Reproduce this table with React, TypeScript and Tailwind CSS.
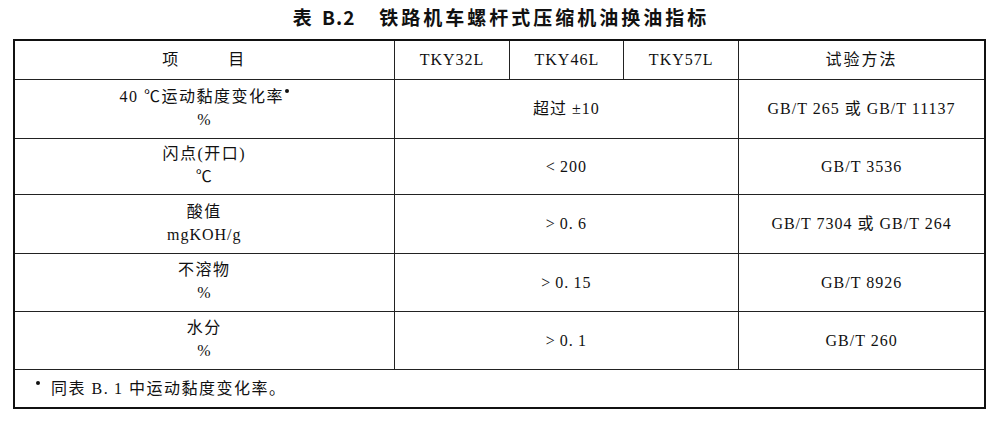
import React from "react";

const font = "font-['Liberation_Serif','Noto_Sans_CJK_SC',serif]";

type Row = { name: React.ReactNode; unit: string; value: string; method: string; h: string };

const Dot = ({ cls }: { cls: string }) => (
  <span className={`inline-block w-[4px] h-[4px] rounded-full bg-[#111] align-top mt-[4px] ${cls}`} />
);

const rows: Row[] = [
  {
    name: (
      <>
        40 ℃运动黏度变化率<Dot cls="ml-[1px]" />
      </>
    ),
    unit: "%",
    value: "超过 ±10",
    method: "GB/T 265 或 GB/T 11137",
    h: "h-[59px]",
  },
  { name: "闪点(开口)", unit: "℃", value: "<\u2009200", method: "GB/T 3536", h: "h-[56px]" },
  { name: "酸值", unit: "mgKOH/g", value: ">\u20090.\u20096", method: "GB/T 7304 或 GB/T 264", h: "h-[59px]" },
  { name: "不溶物", unit: "%", value: ">\u20090.\u200915", method: "GB/T 8926", h: "h-[58px]" },
  { name: "水分", unit: "%", value: ">\u20090.\u20091", method: "GB/T 260", h: "h-[58px]" },
];

export default function App() {
  return (
    <div className={`w-[1000px] h-[423px] bg-white text-[#111] ${font}`}>
      <div className="h-[39px] flex items-center justify-center pb-[4px]">
        <h1 className="text-[19px] font-bold tracking-[3px] font-['Noto_Sans_CJK_SC',sans-serif] pl-[2px]">
          表 <span className="tracking-[1px]">B.</span>2&nbsp;&nbsp;&nbsp;铁路机车螺杆式压缩机油换油指标
        </h1>
      </div>
      <div className="pl-[13px]">
        <table className="w-[973px] border-collapse border-2 border-[#111] text-[16px] leading-[23px] tracking-[1px] text-center">
          <colgroup>
            <col className="w-[381px]" />
            <col className="w-[116px]" />
            <col className="w-[114px]" />
            <col className="w-[115px]" />
            <col className="w-[247px]" />
          </colgroup>
          <thead>
            <tr className="h-[39px]">
              <th className="font-normal border border-[#222] tracking-[2px]">项&nbsp;&nbsp;&nbsp;&nbsp;&nbsp;&nbsp;&nbsp;&nbsp;目</th>
              <th className="font-normal border border-[#222]">TKY32L</th>
              <th className="font-normal border border-[#222]">TKY46L</th>
              <th className="font-normal border border-[#222]">TKY57L</th>
              <th className="font-normal border border-[#222] tracking-[2px]">试验方法</th>
            </tr>
          </thead>
          <tbody>
            {rows.map((r, i) => (
              <tr key={i} className={r.h}>
                <td className="border border-[#222] align-middle">
                  <div className="flex flex-col items-center -mt-[2px]">
                    <span className="tracking-[1.5px]">{r.name}</span>
                    <span>{r.unit}</span>
                  </div>
                </td>
                <td colSpan={3} className="border border-[#222]">{r.value}</td>
                <td className="border border-[#222]">{r.method}</td>
              </tr>
            ))}
            <tr className="h-[39px]">
              <td colSpan={5} className="border border-[#222] text-left pl-[21px] tracking-[1.5px]">
                <Dot cls="mr-[11px]" />同表 B.&thinsp;1 中运动黏度变化率。
              </td>
            </tr>
          </tbody>
        </table>
      </div>
    </div>
  );
}
